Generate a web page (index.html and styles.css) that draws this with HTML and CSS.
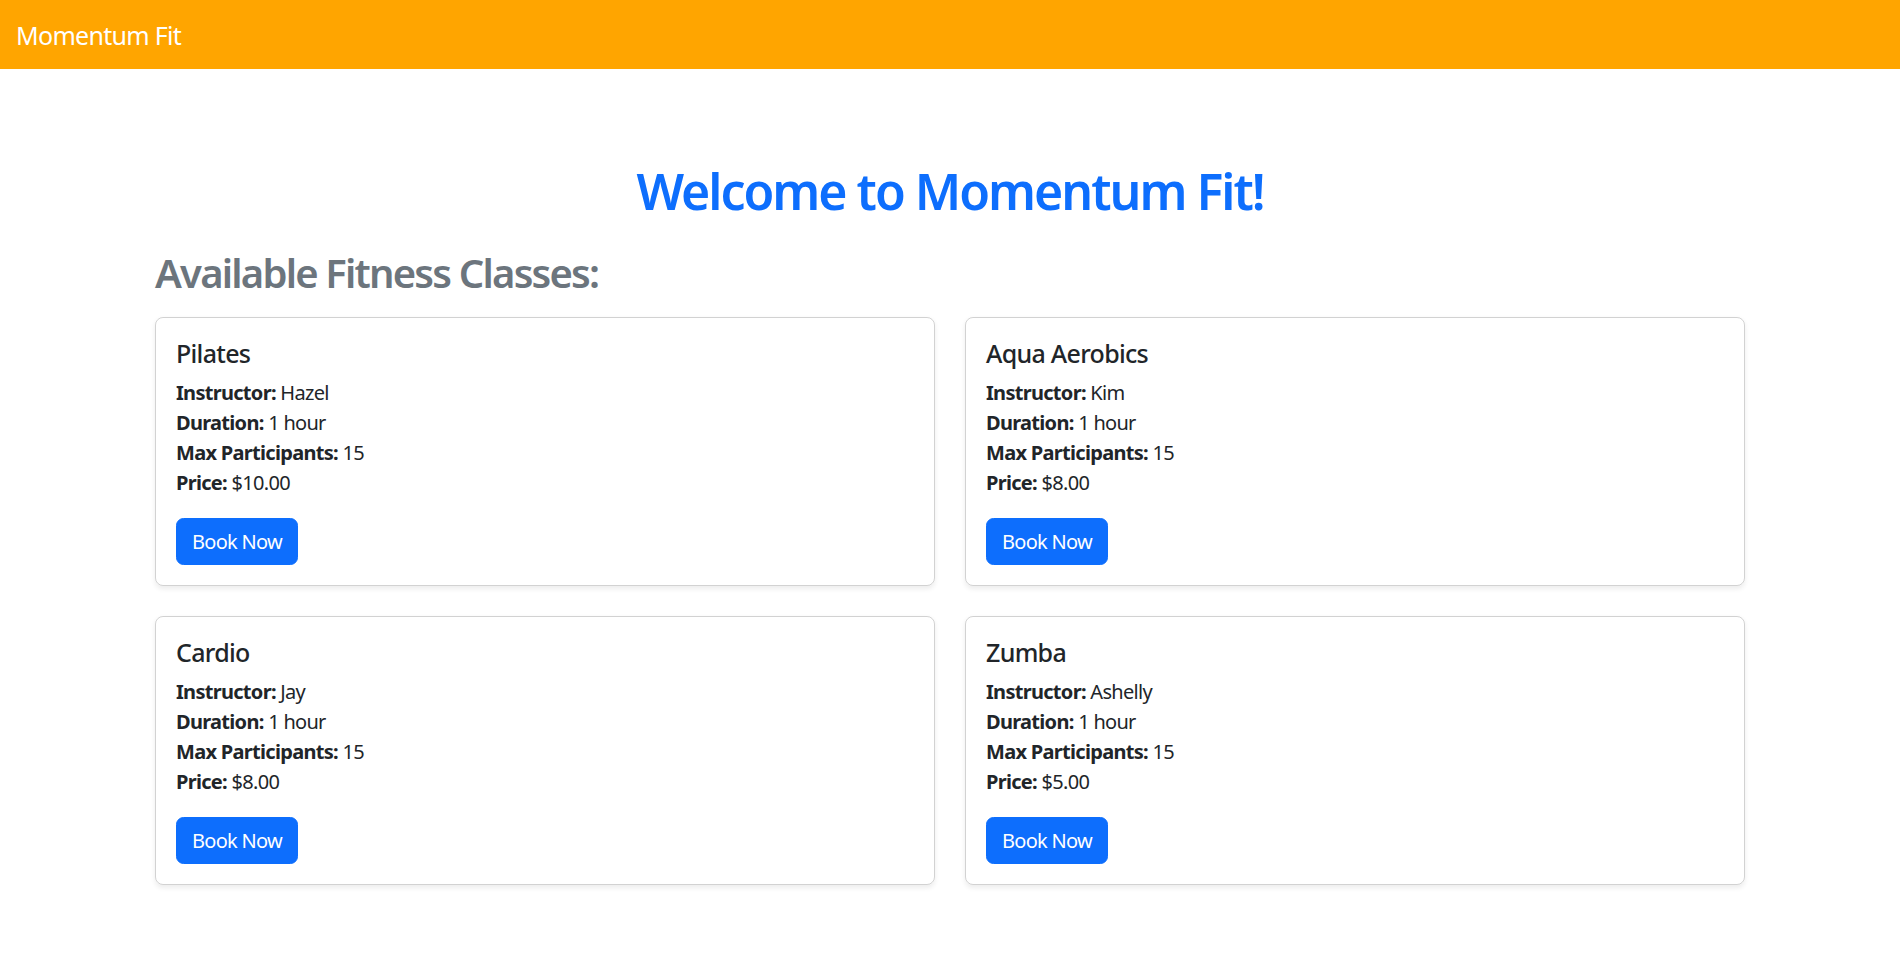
FILE: index.html
```html
<!DOCTYPE html>
<html lang="en">
<head>
<meta charset="utf-8">
<title>Momentum Fit</title>
<link rel="stylesheet" href="styles.css">
</head>
<body>
<nav class="navbar">
  <span class="brand">Momentum Fit</span>
</nav>
<main class="container">
  <h1 class="title">Welcome to Momentum Fit!</h1>
  <h2 class="subtitle">Available Fitness Classes:</h2>
  <div class="grid">
    <div class="card">
      <h5 class="card-title">Pilates</h5>
      <p class="info"><strong>Instructor:</strong> Hazel<br><strong>Duration:</strong> 1 hour<br><strong>Max Participants:</strong> 15<br><strong>Price:</strong> $10.00</p>
      <button class="btn">Book Now</button>
    </div>
    <div class="card">
      <h5 class="card-title">Aqua Aerobics</h5>
      <p class="info"><strong>Instructor:</strong> Kim<br><strong>Duration:</strong> 1 hour<br><strong>Max Participants:</strong> 15<br><strong>Price:</strong> $8.00</p>
      <button class="btn">Book Now</button>
    </div>
    <div class="card">
      <h5 class="card-title">Cardio</h5>
      <p class="info"><strong>Instructor:</strong> Jay<br><strong>Duration:</strong> 1 hour<br><strong>Max Participants:</strong> 15<br><strong>Price:</strong> $8.00</p>
      <button class="btn">Book Now</button>
    </div>
    <div class="card">
      <h5 class="card-title">Zumba</h5>
      <p class="info"><strong>Instructor:</strong> Ashelly<br><strong>Duration:</strong> 1 hour<br><strong>Max Participants:</strong> 15<br><strong>Price:</strong> $5.00</p>
      <button class="btn">Book Now</button>
    </div>
  </div>
</main>
</body>
</html>
```
FILE: styles.css
```css
* { box-sizing: border-box; }
html, body { margin: 0; padding: 0; }
body {
  font-family: "Noto Sans", "Open Sans", sans-serif;
  font-size: 20px;
  line-height: 30px;
  color: #212529;
  background: #fff;
  letter-spacing: -0.035em;
}
.navbar {
  height: 69px;
  background: #ffa500;
  display: flex;
  align-items: center;
  padding: 0 16px;
}
.brand {
  color: #fff;
  font-size: 25px;
  line-height: 30px;
}
.container {
  width: 1590px;
  margin: 0 auto;
  padding-bottom: 40px;
}
.title {
  margin: 92px 0 28px;
  text-align: center;
  color: #0d6efd;
  font-size: 50px;
  line-height: 60px;
  font-weight: 600;
  letter-spacing: -0.04em;
}
.subtitle {
  margin: 0 0 20px;
  color: #6c757d;
  font-size: 40px;
  line-height: 48px;
  font-weight: 600;
  letter-spacing: -0.045em;
}
.grid {
  display: grid;
  grid-template-columns: 1fr 1fr;
  column-gap: 30px;
  row-gap: 30px;
}
.card {
  border: 1px solid rgba(0, 0, 0, 0.175);
  border-radius: 8px;
  box-shadow: 0 2.5px 5px rgba(0, 0, 0, 0.075);
  padding: 20px;
  display: flex;
  flex-direction: column;
  align-items: flex-start;
}
.card-title {
  margin: 0 0 10px;
  font-size: 25px;
  line-height: 30px;
  font-weight: 500;
}
.info {
  margin: 0 0 20px;
}
.info strong { font-weight: 700; }
.btn {
  font-family: inherit;
  font-size: 20px;
  line-height: 30px;
  letter-spacing: inherit;
  color: #fff;
  background: #0d6efd;
  border: 1px solid #0d6efd;
  border-radius: 7.5px;
  padding: 7.5px 15px;
  cursor: pointer;
}
```
